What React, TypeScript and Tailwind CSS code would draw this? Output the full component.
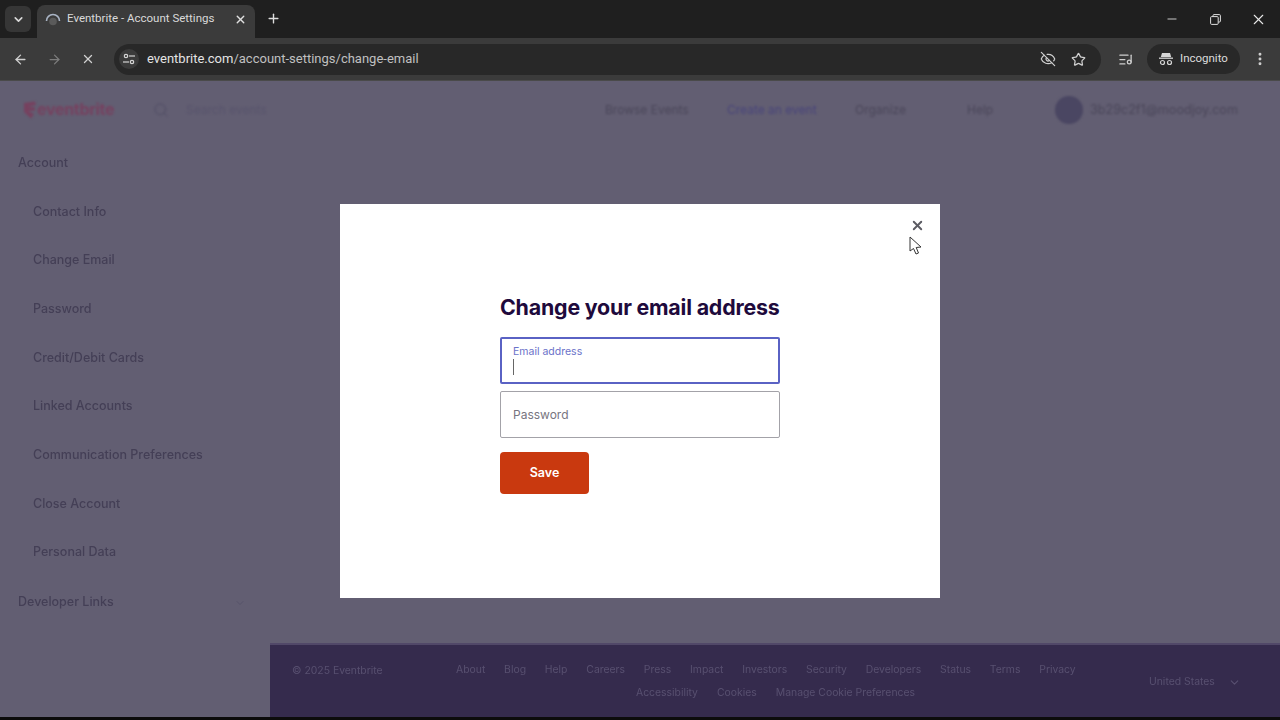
import { ArrowLeft, ArrowRight, ChevronDown, Minus, MoreVertical, Plus, Search, Star, X, EyeOff, ListMusic } from "lucide-react";

const sideLinks = [
  "Contact Info",
  "Change Email",
  "Password",
  "Credit/Debit Cards",
  "Linked Accounts",
  "Communication Preferences",
  "Close Account",
  "Personal Data",
];

const footerRow1 = ["About", "Blog", "Help", "Careers", "Press", "Impact", "Investors", "Security", "Developers", "Status", "Terms", "Privacy"];
const footerRow2 = ["Accessibility", "Cookies", "Manage Cookie Preferences"];

function TabBar() {
  return (
    <div className="h-[38px] bg-[#1f1f1f] flex items-end pl-[5px] shrink-0 font-['Roboto',sans-serif]">
      <div className="w-[26px] h-[26px] mb-[6px] rounded-md bg-[#363636] flex items-center justify-center">
        <ChevronDown size={13} strokeWidth={3} className="text-[#d8d8d8]" />
      </div>
      <div className="ml-[6px] w-[218px] h-[33px] bg-[#3b3b3b] rounded-t-lg flex items-center pl-[8px] pr-[8px]">
        <svg width="16" height="16" viewBox="0 0 16 16" fill="none" className="shrink-0 mb-[5px]">
          <path d="M1.5 10 A6.5 6.5 0 0 1 14.5 10" stroke="#a9b4c4" strokeWidth="1.6" />
          <circle cx="8" cy="10.5" r="3.8" fill="#5a5a5a" />
        </svg>
        <span className="ml-[6px] text-[11.5px] text-[#d9d9d9] truncate flex-1 mb-[5px]">Eventbrite - Account Settings</span>
        <X size={13} strokeWidth={2.5} className="text-[#e0e0e0] mb-[5px]" />
      </div>
      <Plus size={15} strokeWidth={2.2} className="ml-[11px] mb-[12px] text-[#dddddd]" />
      <div className="ml-auto flex items-center h-full">
        <Minus size={14} strokeWidth={1.5} className="text-[#e0e0e0] mr-[31px]" />
        <svg width="11" height="11" viewBox="0 0 11 11" fill="none" className="mr-[29px]">
          <rect x="0.6" y="2.6" width="7.6" height="7.8" rx="1" stroke="#e0e0e0" />
          <path d="M3 2.5V1.6a1 1 0 0 1 1-1h5.4a1 1 0 0 1 1 1V7a1 1 0 0 1-1 1h-1" stroke="#e0e0e0" />
        </svg>
        <X size={17} strokeWidth={1.5} className="text-[#e8e8e8] mr-[13px]" />
      </div>
    </div>
  );
}

function AddressBar() {
  return (
    <div className="h-[43px] bg-[#3b3b3b] flex items-center shrink-0 border-b border-[#4a4a4a] font-['Roboto',sans-serif]">
      <ArrowLeft size={15} strokeWidth={2.2} className="ml-[13px] text-[#d0d0d0]" />
      <ArrowRight size={15} strokeWidth={2} className="ml-[19px] text-[#7c7c7c]" />
      <X size={14} strokeWidth={2.2} className="ml-[19px] text-[#d0d0d0]" />
      <div className="ml-[19px] w-[987px] h-[31px] rounded-full bg-[#282828] flex items-center pl-[5px]">
        <div className="w-[20px] h-[20px] rounded-full bg-[#3b3b3b] flex items-center justify-center">
          <svg width="12" height="12" viewBox="0 0 12 12" fill="none" stroke="#d6d6d6" strokeWidth="1.2">
            <circle cx="3" cy="3" r="1.7" />
            <path d="M6 3h6" />
            <circle cx="9" cy="9" r="1.7" />
            <path d="M0 9h6" />
          </svg>
        </div>
        <span className="ml-[8px] text-[13px] text-[#e4e4e4]">
          eventbrite.com<span className="text-[#c0c0c0]">/account-settings/change-email</span>
        </span>
        <EyeOff size={16} strokeWidth={1.8} className="ml-auto text-[#d0d0d0]" />
        <Star size={15} strokeWidth={2} className="ml-[15px] mr-[15px] text-[#d0d0d0]" />
      </div>
      <ListMusic size={15} strokeWidth={2} className="ml-[17px] text-[#d0d0d0]" />
      <div className="ml-[14px] w-[93px] h-[30px] rounded-full bg-[#282828] flex items-center pl-[11px]">
        <svg width="16" height="14" viewBox="0 0 16 14" fill="none">
          <path d="M4 1h8l1.2 4H2.8z" fill="#d6d6d6" />
          <path d="M1 6.2h14" stroke="#d6d6d6" strokeWidth="1.3" />
          <circle cx="4.5" cy="10.5" r="2" stroke="#d6d6d6" strokeWidth="1.2" />
          <circle cx="11.5" cy="10.5" r="2" stroke="#d6d6d6" strokeWidth="1.2" />
        </svg>
        <span className="ml-[6px] text-[11.5px] text-[#dcdcdc]">Incognito</span>
      </div>
      <MoreVertical size={16} strokeWidth={2.4} className="ml-[12px] text-[#d0d0d0]" />
    </div>
  );
}

function SiteHeader() {
  return (
    <div className="h-[56px] pt-[1px] flex items-center shrink-0 text-[12px] text-[#4a4659] blur-[0.9px]">
      <svg width="14" height="18" viewBox="0 0 14 18" className="ml-[23px]" fill="#76415f">
        <path d="M1 2 L12 0.5 L13 4 L5 5.5 L12 6.5 L12 9.5 L5 10 L11 13 L8 17.5 L1 11 Z" />
      </svg>
      <span className="w-[116px] shrink-0 text-[16px] font-bold text-[#76415f] tracking-[-0.3px] mb-[2px]">eventbrite</span>
      <Search size={16} strokeWidth={1.5} className="text-[#504c64] shrink-0" />
      <span className="ml-[17px] w-[419px] shrink-0 text-[#58546c]">Search events</span>
      <span className="w-[122px] shrink-0">Browse Events</span>
      <span className="w-[128px] shrink-0 text-[#48447a]">Create an event</span>
      <span className="w-[112px] shrink-0">Organize</span>
      <span className="w-[88px] shrink-0">Help</span>
      <div className="w-[28px] h-[28px] rounded-full bg-[#4a4662] shrink-0" />
      <span className="ml-[7px] text-[12.6px] leading-[18px] pt-[1px] whitespace-nowrap">3b29c2f1@moodjoy.com</span>
    </div>
  );
}

function Sidebar() {
  return (
    <div className="w-[270px] shrink-0 pt-[17px] text-[12.5px] text-[#443f56] font-medium blur-[0.5px]">
      <div className="pl-[18px] h-[18px] flex items-center">Account</div>
      <div className="mt-[31px] flex flex-col gap-[30.7px]">
        {sideLinks.map((link) => (
          <div key={link} className="pl-[33px] h-[18px] flex items-center">{link}</div>
        ))}
      </div>
      <div className="mt-[32px] pl-[18px] pr-[24px] h-[18px] flex items-center justify-between">
        Developer Links
        <ChevronDown size={12} className="text-[#57536a]" />
      </div>
    </div>
  );
}

function Footer() {
  return (
    <div className="mt-auto h-[74px] bg-[#352b4d] border-t-[2px] border-[#514868] flex items-center text-[10.4px] text-[#585070]">
      <span className="ml-[22px] w-[164px] shrink-0 mb-[20px] blur-[0.5px]">© 2025 Eventbrite</span>
      <div className="w-[620px] shrink-0 flex flex-col items-start gap-[7px] blur-[0.5px]">
        <div className="flex gap-[18.8px]">
          {footerRow1.map((item) => <span key={item}>{item}</span>)}
        </div>
        <div className="flex gap-[19px] ml-[180px]">
          {footerRow2.map((item) => <span key={item}>{item}</span>)}
        </div>
      </div>
      <span className="ml-[73px] mt-[2px] blur-[0.5px]">United States</span>
      <ChevronDown size={13} className="ml-[13px] mt-[2px]" />
    </div>
  );
}

function ChangeEmailModal() {
  return (
    <div className="absolute left-[340px] top-[204px] w-[600px] h-[394px] bg-white">
      <X size={15} strokeWidth={3} className="absolute left-[570px] top-[14px] text-[#5b5b63]" />
      {/* mouse pointer */}
      <svg width="13" height="20" viewBox="0 0 13 20" className="absolute left-[569px] top-[32px]">
        <path d="M1 1 L1 15 L4.5 12.5 L7 18 L9.5 17 L7.2 11.5 L12 11 Z" fill="#fff" stroke="#333" strokeWidth="1" />
      </svg>
      <div className="ml-[160px] w-[280px] pt-[89px]">
        <h2 className="text-[21.4px] leading-[28px] font-bold text-[#1e0a3c] tracking-[-0.2px] whitespace-nowrap">Change your email address</h2>
        <div className="mt-[16px] h-[47px] border-2 border-[#5a62c4] rounded-[2px] pl-[11px] pt-[6px]">
          <div className="text-[10.5px] leading-[14px] text-[#6b72c9]">Email address</div>
          <div className="w-px h-[16px] bg-[#666]" />
        </div>
        <div className="mt-[7px] h-[47px] border border-[#a3a2a8] rounded-[2px] pl-[12px] flex items-center text-[12px] text-[#77757f]">Password</div>
        <button className="mt-[14px] w-[89px] h-[42px] rounded-[4px] bg-[#c9390f] text-white text-[12.5px] font-semibold">Save</button>
      </div>
    </div>
  );
}

export default function App() {
  return (
    <div className="relative w-[1280px] h-[720px] overflow-hidden flex flex-col bg-[#625e72] font-['Inter',sans-serif]">
      <TabBar />
      <AddressBar />
      <SiteHeader />
      <div className="flex-1 flex min-h-0">
        <Sidebar />
        <div className="flex-1 flex flex-col">
          <Footer />
        </div>
      </div>
      <div className="h-[3px] bg-[#0c0c0c] shrink-0" />
      <ChangeEmailModal />
    </div>
  );
}
